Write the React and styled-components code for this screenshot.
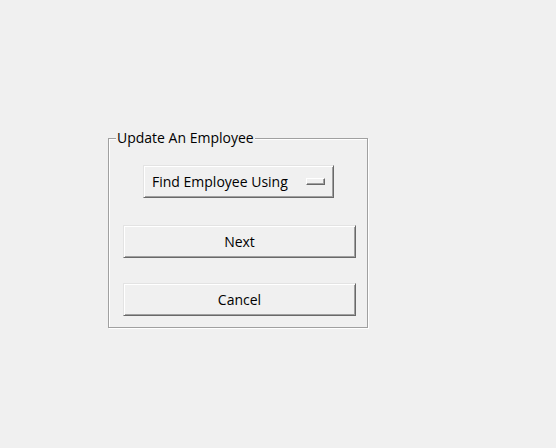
import React from 'react';
import styled, { createGlobalStyle } from 'styled-components';

const GlobalStyle = createGlobalStyle`
  html, body {
    margin: 0;
    padding: 0;
    background: #f0f0f0;
  }
  body {
    font-family: "Open Sans", "Noto Sans", sans-serif;
    font-size: 14px;
    color: #000;
  }
`;

const Window = styled.div`
  width: 556px;
  height: 448px;
  background: #f0f0f0;
  padding: 138px 0 0 108px;
  box-sizing: border-box;
`;

const Frame = styled.div`
  position: relative;
  width: 260px;
  height: 190px;
  box-sizing: border-box;
  border: 1px solid #a0a0a0;
  box-shadow: inset 1px 1px #ffffff, 1px 1px #ffffff;
  display: flex;
  flex-direction: column;
  align-items: flex-start;
  padding: 26px 0 0 14px;
`;

const Legend = styled.span`
  position: absolute;
  top: -10px;
  left: 7px;
  padding: 0 1px;
  background: #f0f0f0;
  line-height: 18px;
`;

const Raised = styled.button`
  font: inherit;
  color: #000;
  background: #f0f0f0;
  box-sizing: border-box;
  height: 33px;
  padding: 0;
  border: 1px solid;
  border-color: #e3e3e3 #696969 #696969 #e3e3e3;
  box-shadow: inset 1px 1px #ffffff, inset -1px -1px #a0a0a0;
  outline: none;
`;

const MenuButton = styled(Raised)`
  width: 191px;
  margin-left: 20px;
  display: flex;
  align-items: center;
  justify-content: space-between;
  padding: 0 8px 0 8px;
`;

const Indicator = styled.span`
  width: 19px;
  height: 7px;
  box-sizing: border-box;
  border: 1px solid;
  border-color: #ffffff #696969 #696969 #ffffff;
  box-shadow: inset -1px -1px #a0a0a0;
  background: #f0f0f0;
`;

const Button = styled(Raised)`
  width: 233px;
  margin-top: ${(p) => p.$gap}px;
  text-align: center;
`;

export default function App() {
  return (
    <>
      <GlobalStyle />
      <Window>
        <Frame>
          <Legend>Update An Employee</Legend>
          <MenuButton>
            <span>Find Employee Using</span>
            <Indicator />
          </MenuButton>
          <Button $gap={27}>Next</Button>
          <Button $gap={25}>Cancel</Button>
        </Frame>
      </Window>
    </>
  );
}
